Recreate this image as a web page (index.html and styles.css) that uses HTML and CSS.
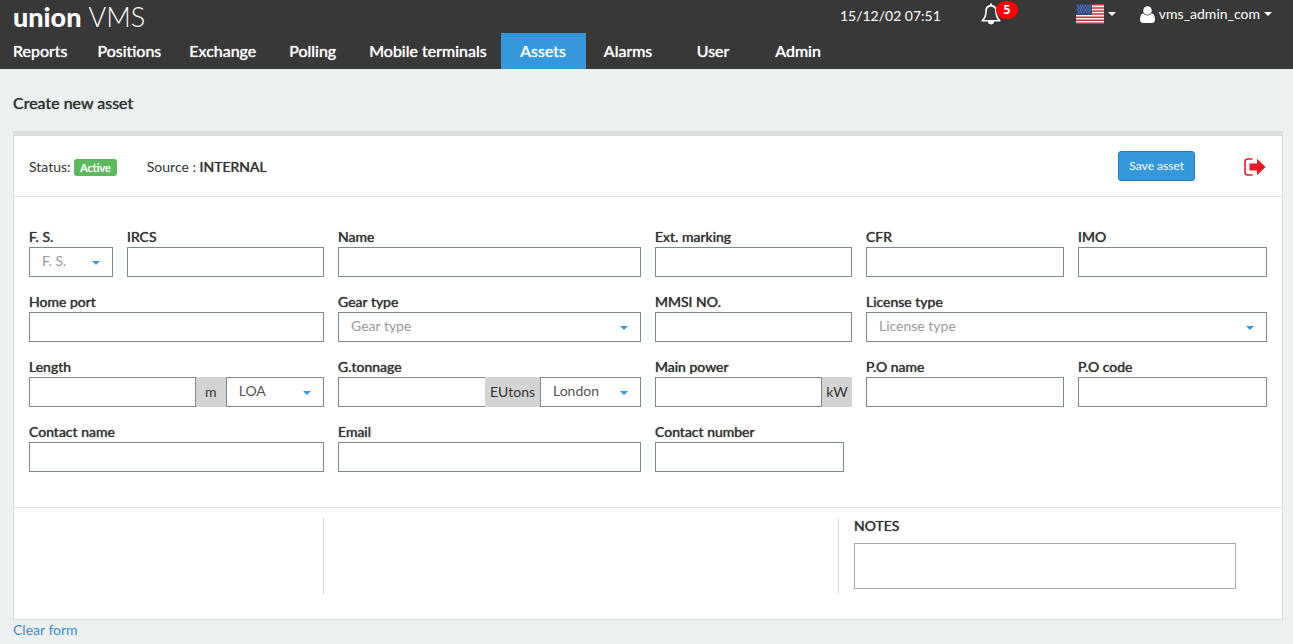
FILE: index.html
```html
<!DOCTYPE html>
<html lang="en">
<head>
<meta charset="utf-8">
<title>Union VMS - Create new asset</title>
<link rel="stylesheet" href="styles.css">
</head>
<body>
<header class="topbar">
  <div class="topbar-row">
    <a class="logo" href="#"><span class="logo-strong">union</span> <span class="logo-thin">VMS</span></a>
    <div class="tools">
      <time class="clock">15/12/02 07:51</time>
      <button class="tool bell" type="button" aria-label="Notifications">
        <svg width="20" height="22" viewBox="0 0 20 22" fill="none" stroke="#fff" stroke-width="1.6" stroke-linejoin="round"><path d="M10 2.6C6.6 2.8 5 5.4 5 8.400C5 13 3.600 15.500 1.200 17.800H18.800C16.400 15.500 15 13 15 8.400C15 5.400 13.400 2.800 10 2.600Z"/><path d="M10 .4V2.600" stroke-width="2"/><path d="M7.200 18.200a2.800 2.800 0 0 0 5.600 0Z" fill="#fff" stroke-width="1"/></svg>
        <span class="badge">5</span>
      </button>
      <button class="tool language" type="button" aria-label="Language">
        <svg width="28" height="20" viewBox="0 0 28 20"><rect width="28" height="20" rx="1.500" fill="#f4f1f1"/><path d="M0 .8H28M0 3.900H28M0 7H28M0 10.100H28M0 13.200H28M0 16.300H28M0 19.300H28" stroke="#c9353f" stroke-width="1.500"/><rect width="16" height="11" fill="#2f4a7d"/><path d="M1.500 2H15M2.500 4H15M1.500 6H15M2.500 8H15" stroke="#93a3c2" stroke-width="1" stroke-dasharray="1 1.500"/></svg>
        <span class="caret"></span>
      </button>
      <button class="tool account" type="button">
        <svg width="15" height="17" viewBox="0 0 15 17" fill="#fff"><circle cx="7.500" cy="4.500" r="4.300"/><path d="M3.300 7.200C1 7.700 0 10.500 0 13.500C0 15.700 1.200 17 3 17H12C13.800 17 15 15.700 15 13.500C15 10.500 14 7.700 11.700 7.200C9.500 10.200 5.500 10.200 3.300 7.200Z"/></svg>
        <span>vms_admin_com</span>
        <span class="caret"></span>
      </button>
    </div>
  </div>
  <nav class="nav">
    <a href="#">Reports</a>
    <a href="#">Positions</a>
    <a href="#">Exchange</a>
    <a href="#">Polling</a>
    <a href="#">Mobile terminals</a>
    <a class="active" href="#">Assets</a>
    <a href="#">Alarms</a>
    <a href="#">User</a>
    <a href="#">Admin</a>
  </nav>
</header>
<main class="page">
  <h1 class="title">Create new asset</h1>
  <form class="panel" id="asset-form">
    <div class="panel-head">
      <div class="meta">Status: <span class="status">Active</span></div>
      <div class="meta">Source : <span class="strong">INTERNAL</span></div>
      <div class="actions">
        <button class="save" type="submit">Save asset</button>
        <button class="exit" type="button" aria-label="Exit">
          <svg width="22" height="18" viewBox="0 0 22 18"><path d="M8.500 1H4Q1 1 1 4V14Q1 17 4 17H8.500" fill="none" stroke="#e31b23" stroke-width="1.600"/><path d="M5.500 5.500H13V.8L21.500 9L13 17.200V12.500H5.500Z" fill="#e31b23"/></svg>
        </button>
      </div>
    </div>
    <div class="fields">
      <div class="field"><label for="fs">F. S.</label>
        <div class="select placeholder"><select id="fs"><option>F. S.</option></select></div></div>
      <div class="field"><label for="ircs">IRCS</label><input id="ircs" type="text"></div>
      <div class="field"><label for="name">Name</label><input id="name" type="text"></div>
      <div class="field"><label for="marking">Ext. marking</label><input id="marking" type="text"></div>
      <div class="field"><label for="cfr">CFR</label><input id="cfr" type="text"></div>
      <div class="field"><label for="imo">IMO</label><input id="imo" type="text"></div>

      <div class="field wide"><label for="port">Home port</label><input id="port" type="text"></div>
      <div class="field"><label for="gear">Gear type</label>
        <div class="select placeholder"><select id="gear"><option>Gear type</option></select></div></div>
      <div class="field"><label for="mmsi">MMSI NO.</label><input id="mmsi" type="text"></div>
      <div class="field wide"><label for="license">License type</label>
        <div class="select placeholder"><select id="license"><option>License type</option></select></div></div>

      <div class="field wide"><label for="length">Length</label>
        <div class="group length-group"><input id="length" type="text"><span class="unit">m</span>
          <div class="select"><select aria-label="Length type"><option>LOA</option></select></div></div></div>
      <div class="field"><label for="tonnage">G.tonnage</label>
        <div class="group tonnage-group"><input id="tonnage" type="text"><span class="unit">EUtons</span>
          <div class="select"><select aria-label="Tonnage type"><option>London</option></select></div></div></div>
      <div class="field"><label for="power">Main power</label>
        <div class="group power-group"><input id="power" type="text"><span class="unit">kW</span></div></div>
      <div class="field"><label for="poname">P.O name</label><input id="poname" type="text"></div>
      <div class="field"><label for="pocode">P.O code</label><input id="pocode" type="text"></div>

      <div class="field wide"><label for="contact">Contact name</label><input id="contact" type="text"></div>
      <div class="field"><label for="email">Email</label><input id="email" type="email"></div>
      <div class="field short"><label for="phone">Contact number</label><input id="phone" type="text"></div>
    </div>
    <div class="extras">
      <div class="extra"></div>
      <div class="extra"></div>
      <div class="notes"><label for="notes">NOTES</label><textarea id="notes"></textarea></div>
    </div>
  </form>
  <button class="clear" type="reset" form="asset-form">Clear form</button>
</main>
</body>
</html>
```
FILE: styles.css
```css
* { box-sizing: border-box; }

body {
  margin: 0;
  background: #ecf0f1;
  color: #333;
  font: 14px/20px Lato, "Open Sans", sans-serif;
}

button, input, select, textarea { font: inherit; color: inherit; border-radius: 0; }
button { border: 0; padding: 0; background: none; cursor: pointer; }
a { text-decoration: none; }
svg { display: block; }

/* Top bar */
.topbar { background: #383838; color: #fff; }
.topbar-row { display: flex; justify-content: space-between; height: 33px; padding: 0 21px 0 13px; }
.logo { color: #fff; font-size: 27px; line-height: 34px; }
.logo-strong { font-weight: 900; }
.logo-thin { font-weight: 300; }
.tools { display: flex; align-items: center; height: 28px; }
.clock { margin-right: 40px; padding-top: 4px; }
.tool { display: flex; align-items: center; }
.bell { position: relative; margin-right: 75px; }
.badge {
  position: absolute;
  top: -2px;
  left: 15px;
  width: 22px;
  border-radius: 9px;
  background: #f00;
  font: bold 12px/18px "Open Sans", sans-serif;
  text-align: center;
}
.language { gap: 4px; margin-right: 24px; }
.account { gap: 4px; }
.caret { border: 4px solid transparent; border-top-color: #fff; border-bottom: 0; }

.nav { display: flex; }
.nav a {
  min-width: 85px;
  padding: 0 14px;
  color: #fff;
  font-size: 16px;
  line-height: 36px;
  text-align: center;
  text-shadow: 0 0 1px #fff;
}
.nav a:first-child { min-width: 0; padding: 0 16px 0 13px; }
.nav .active { background: #3498db; }

/* Page */
.page { padding: 23px 10px 0 13px; }
.title { margin: 0 0 18px; font-size: 16px; line-height: 21px; font-weight: 400; text-shadow: 0 0 1px #333; }
.panel { border: 1px solid #ddd; border-top-width: 5px; background: #fff; }
.panel-head {
  display: flex;
  align-items: center;
  gap: 30px;
  height: 61px;
  padding: 0 16px 0 15px;
  border-bottom: 1px solid #ddd;
}
.meta { padding-top: 2px; }
.strong, .field label, .notes label { text-shadow: 0 0 1px #333; }
.status {
  display: inline-block;
  padding: 0 6px;
  border-radius: 3px;
  background: #5cb85c;
  color: #fff;
  font-size: 11px;
  line-height: 17px;
  text-shadow: 0 0 1px #fff;
}
.actions { display: flex; align-items: center; gap: 49px; margin-left: auto; }
.exit { padding-top: 2px; }
.save {
  height: 30px;
  padding: 0 10px;
  border: 1px solid #217dbb;
  border-radius: 3px;
  background: #3498db;
  color: #fff;
  font-size: 12px;
}

/* Fields */
.fields {
  display: grid;
  grid-template-columns: 84fr 197fr 303fr 197fr 198fr 189fr;
  gap: 15px 14px;
  padding: 30px 15px 35px;
}
.field { min-width: 0; }
.field label { display: block; }
.wide { grid-column: span 2; }
.short { margin-right: 8px; }
.field input, .field select {
  display: block;
  width: 100%;
  height: 30px;
  border: 1px solid #7b8a8b;
  background: #fff;
}
.field input { padding: 0 8px; }
.select { position: relative; min-width: 0; }
.field select { appearance: none; padding: 0 24px 2px 12px; color: #555; }
.field .placeholder select { color: #999; }
.select::after {
  content: "";
  position: absolute;
  top: 14px;
  right: 13px;
  border: 4px solid transparent;
  border-top-color: #3498db;
  border-bottom: 0;
  pointer-events: none;
}
.group { display: grid; }
.length-group { grid-template-columns: 1fr 30px calc(100% / 3); }
.tonnage-group { grid-template-columns: 1fr 55px calc(100% / 3); }
.power-group { grid-template-columns: 1fr 30px; }
.tonnage-group input { border-right: 0; }
.unit { background: #d3d3d3; line-height: 30px; text-align: center; }

/* Lower section */
.extras {
  display: grid;
  grid-template-columns: 310fr 515fr 443fr;
  padding: 10px 0 25px;
  border-top: 1px solid #ddd;
}
.extra { border-right: 1px solid #ddd; }
.notes { height: 76px; padding: 0 46px 0 15px; }
.notes label { display: block; margin-bottom: 9px; line-height: 16px; }
.notes textarea { display: block; width: 100%; height: 46px; border: 1px solid #a9a9a9; resize: none; }
.clear { display: block; color: #428bca; }
```
